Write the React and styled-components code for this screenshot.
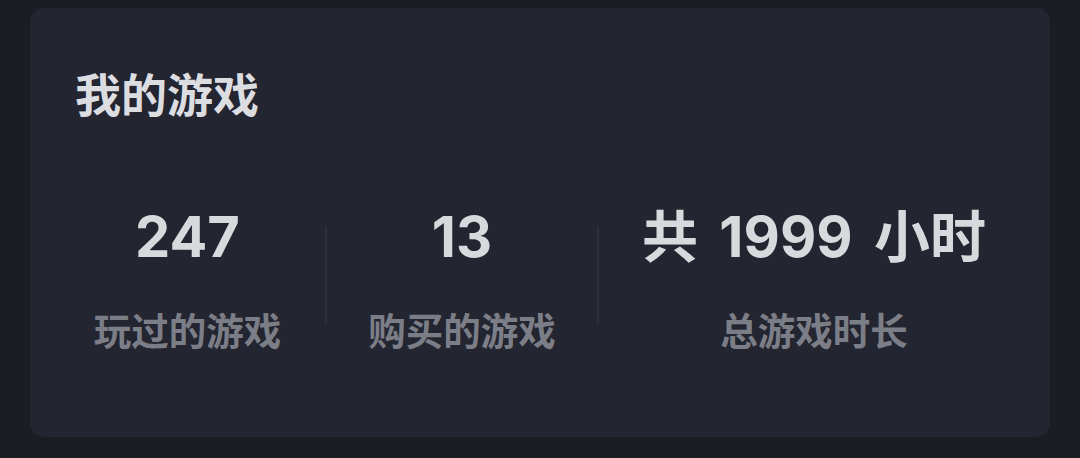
import React from "react";
import styled, { createGlobalStyle } from "styled-components";

const Global = createGlobalStyle`
  html, body {
    margin: 0;
    padding: 0;
    background: #1c1d23;
  }
  body {
    font-family: Inter, "Noto Sans CJK SC", "Noto Sans", sans-serif;
    -webkit-font-smoothing: antialiased;
  }
`;

const Page = styled.div`
  width: 1080px;
  height: 458px;
  box-sizing: border-box;
  padding: 8px 30px 0 30px;
`;

const Card = styled.section`
  width: 1020px;
  height: 429px;
  box-sizing: border-box;
  background: #232530;
  border-radius: 14px;
  padding: 56px 0 0 45px;
  display: flex;
  flex-direction: column;
`;

const Title = styled.h2`
  margin: 0;
  font-family: "Noto Sans CJK SC", sans-serif;
  font-size: 46px;
  line-height: 56px;
  font-weight: 700;
  color: #dcdde1;
`;

const Stats = styled.div`
  display: flex;
  align-items: stretch;
  margin-top: 86px;
  margin-left: -25px;
`;

const Stat = styled.div`
  width: ${(p) => p.$w}px;
  display: flex;
  flex-direction: column;
  align-items: center;
  white-space: nowrap;
`;

const Value = styled.div`
  font-family: Inter, "Noto Sans CJK SC", sans-serif;
  font-size: 56px;
  line-height: 62px;
  font-weight: 700;
  word-spacing: 8px;
  color: #d8d9dd;
`;

const Label = styled.div`
  margin-top: 41px;
  font-family: "Noto Sans CJK SC", sans-serif;
  font-size: 37.5px;
  line-height: 40px;
  font-weight: 700;
  color: #7c7e87;
`;

const Divider = styled.div`
  width: 2px;
  height: 96px;
  margin-top: 21px;
  background: #2f313b;
`;

const stats = [
  { value: "247", label: "玩过的游戏", w: 275 },
  { value: "13", label: "购买的游戏", w: 270 },
  { value: "共 1999 小时", label: "总游戏时长", w: 430 },
];

export default function App() {
  return (
    <>
      <Global />
      <Page>
        <Card>
          <Title>我的游戏</Title>
          <Stats>
            {stats.map((s, i) => (
              <React.Fragment key={s.label}>
                {i > 0 && <Divider />}
                <Stat $w={s.w}>
                  <Value>{s.value}</Value>
                  <Label>{s.label}</Label>
                </Stat>
              </React.Fragment>
            ))}
          </Stats>
        </Card>
      </Page>
    </>
  );
}
